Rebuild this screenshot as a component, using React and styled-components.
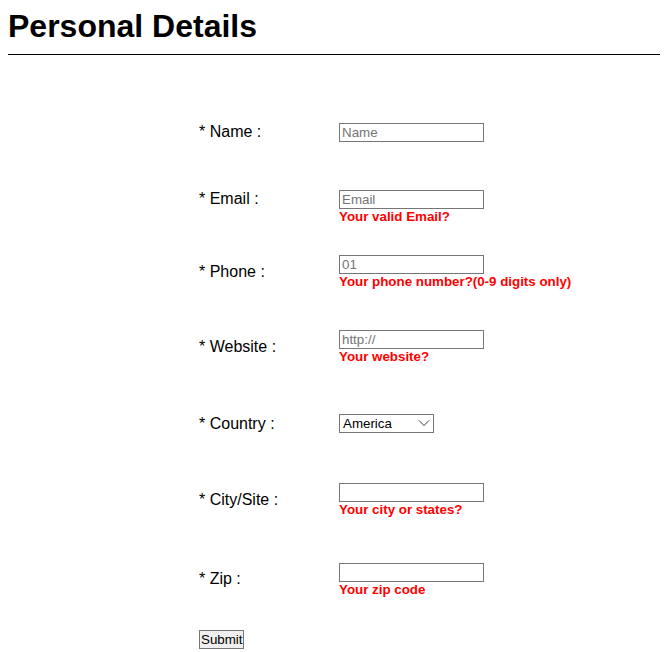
import React from 'react';
import styled, { createGlobalStyle } from 'styled-components';

const GlobalStyle = createGlobalStyle`
  html {
    overflow: hidden;
  }
  body {
    margin: 8px;
    font-family: Arial, "Liberation Sans", sans-serif;
    color: #000;
    background: #fff;
  }
`;

const Header = styled.header`
  margin-right: -8px;
  padding-bottom: 9px;
  border-bottom: 1px solid #000;
`;

const Title = styled.h1`
  margin: 0;
  font-size: 32px;
  line-height: 37px;
  font-weight: bold;
`;

const Form = styled.form`
  display: flex;
  flex-direction: column;
  padding: 68px 0 0 191px;
`;

const Row = styled.div`
  display: grid;
  grid-template-columns: 140px auto;
  align-items: start;
  height: ${(p) => p.$pitch}px;
`;

const Label = styled.label`
  font-size: 16px;
  line-height: 18px;
  margin-top: ${(p) => p.$offset}px;
`;

const Field = styled.div`
  display: flex;
  flex-direction: column;
  align-items: flex-start;
`;

const Input = styled.input`
  box-sizing: border-box;
  width: 145px;
  height: 19px;
  padding: 0 2px;
  border: 1px solid #767676;
  font-family: Arial, "Liberation Sans", sans-serif;
  font-size: 13.33px;
  color: #000;
  outline: none;
  &::placeholder {
    color: #757575;
  }
`;

const SelectBox = styled.div`
  position: relative;
  width: 95px;
  height: 19px;
`;

const Select = styled.select`
  box-sizing: border-box;
  appearance: none;
  width: 95px;
  height: 19px;
  padding: 0 3px;
  border: 1px solid #767676;
  border-radius: 0;
  background: #fff;
  font-family: Arial, "Liberation Sans", sans-serif;
  font-size: 13.33px;
  color: #000;
`;

const Chevron = styled.svg`
  position: absolute;
  right: 4px;
  top: 5px;
  pointer-events: none;
`;

const Error = styled.span`
  color: #ff0000;
  font-size: 13.33px;
  font-weight: bold;
  line-height: 15px;
`;

const SubmitButton = styled.button`
  align-self: flex-start;
  box-sizing: border-box;
  height: 19px;
  padding: 0 1px;
  border: 1px solid #767676;
  border-radius: 0;
  background: #efefef;
  font-family: Arial, "Liberation Sans", sans-serif;
  font-size: 13.33px;
  color: #000;
`;

const fields = [
  { label: 'Name', placeholder: 'Name', pitch: 67, offset: 0 },
  { label: 'Email', placeholder: 'Email', error: 'Your valid Email?', pitch: 65, offset: 0 },
  { label: 'Phone', placeholder: '01', error: 'Your phone number?(0-9 digits only)', pitch: 75, offset: 8 },
  { label: 'Website', placeholder: 'http://', error: 'Your website?', pitch: 84, offset: 8 },
  { label: 'Country', select: true, pitch: 69, offset: 1 },
  { label: 'City/Site', placeholder: '', error: 'Your city or states?', pitch: 80, offset: 8 },
  { label: 'Zip', placeholder: '', error: 'Your zip code', pitch: 67, offset: 7 },
];

export default function App() {
  return (
    <>
      <GlobalStyle />
      <Header>
        <Title>Personal Details</Title>
      </Header>
      <Form onSubmit={(e) => e.preventDefault()}>
        {fields.map((f) => (
          <Row key={f.label} $pitch={f.pitch}>
            <Label $offset={f.offset}>* {f.label} :</Label>
            <Field>
              {f.select ? (
                <SelectBox>
                  <Select defaultValue="America">
                    <option>America</option>
                  </Select>
                  <Chevron width="12" height="8" viewBox="0 0 12 8">
                    <path d="M1 1.5 L6 6.5 L11 1.5" fill="none" stroke="#333" strokeWidth="1" />
                  </Chevron>
                </SelectBox>
              ) : (
                <Input placeholder={f.placeholder} />
              )}
              {f.error && <Error>{f.error}</Error>}
            </Field>
          </Row>
        ))}
        <SubmitButton type="submit">Submit</SubmitButton>
      </Form>
    </>
  );
}
